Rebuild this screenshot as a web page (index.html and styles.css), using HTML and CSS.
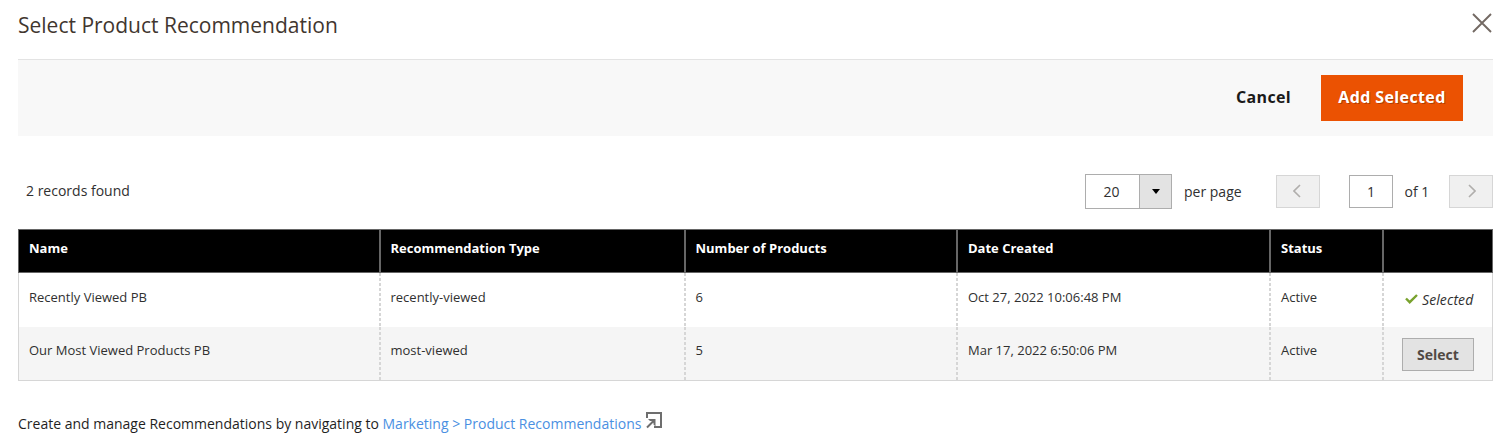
FILE: index.html
```html
<!DOCTYPE html>
<html lang="en"><head><meta charset="utf-8"><title>Select Product Recommendation</title><link rel="stylesheet" href="styles.css"></head>
<body>
<main class="modal">
<header class="header"><h1>Select Product Recommendation</h1>
<svg class="close" width="20" height="20" viewBox="0 0 20 20" fill="none" stroke="#736963" stroke-width="1.9"><path d="M1 1 19 19M19 1 1 19"/></svg></header>
<div class="actions"><button class="cancel">Cancel</button><button class="add">Add Selected</button></div>
<div class="toolbar"><span class="count">2 records found</span>
<div class="pager"><div class="size"><span class="size-value">20</span><span class="size-arrow"><svg width="8" height="5" viewBox="0 0 8 5"><path d="M0 0h8L4 5z" fill="#000"/></svg></span></div><span class="per">per page</span>
<button class="nav prev"><svg width="8" height="14" viewBox="0 0 8 14" fill="none" stroke="#b0aeac" stroke-width="1.6"><path d="M7 1 1 7l6 6"/></svg></button><span class="page">1</span><span class="of">of 1</span>
<button class="nav next"><svg width="8" height="14" viewBox="0 0 8 14" fill="none" stroke="#b0aeac" stroke-width="1.6"><path d="m1 1 6 6-6 6"/></svg></button></div></div>
<table class="grid"><colgroup><col class="c1"><col class="c2"><col class="c3"><col class="c4"><col class="c5"><col class="c6"></colgroup>
<thead><tr><th>Name</th><th>Recommendation Type</th><th>Number of Products</th><th>Date Created</th><th>Status</th><th></th></tr></thead>
<tbody><tr><td>Recently Viewed PB</td><td>recently-viewed</td><td>6</td><td>Oct 27, 2022 10:06:48 PM</td><td>Active</td><td class="action"><span class="selected"><svg width="13" height="10" viewBox="0 0 13 10" fill="none" stroke="#79a22e" stroke-width="2.4"><path d="m1 4.500 3.700 3.700L12 1"/></svg>Selected</span></td></tr>
<tr><td>Our Most Viewed Products PB</td><td>most-viewed</td><td>5</td><td>Mar 17, 2022 6:50:06 PM</td><td>Active</td><td class="action"><button class="select">Select</button></td></tr></tbody></table>
<p class="note"><span>Create and manage Recommendations by navigating to <a>Marketing &gt; Product Recommendations</a></span><svg class="ext" width="16" height="17" viewBox="0 0 16 17" fill="none" stroke="#6e6e6e" stroke-width="2"><path d="M1 6V1h14v14H8"/><path d="M1 15.500 7.500 9"/><path d="M2 7h7.500v7.500L7.500 12.500V11L5.500 9H4z" fill="#6e6e6e" stroke="none"/></svg></p>
</main></body></html>
```
FILE: styles.css
```css
*{box-sizing:border-box}
body{margin:0;background:#fff;color:#303030;font:14px/20px "Open Sans",sans-serif}
button{font:inherit;padding:0;border:0}
.modal{width:1501px;height:443px;padding:0 8px 0 18px;overflow:hidden}
.header{height:59px;display:flex;justify-content:space-between;align-items:flex-start}
h1{margin:10px 0 0;font-size:21px;line-height:30px;font-weight:400;color:#41362f}
.close{margin:13px 1.5px 0 0}
.actions{height:77px;background:#f8f8f8;border-top:1px solid #e3e3e3;display:flex;justify-content:flex-end;align-items:flex-start;padding:15px 30px 0 0;font-size:16px;font-weight:700}
.cancel{height:46px;padding-bottom:2px;margin-right:30px;background:none;color:#1a1a1a;letter-spacing:.35px}
.add{width:142px;height:46px;padding-bottom:2px;background:#eb5202;color:#fff;text-shadow:1px 1px 0 rgba(0,0,0,.25);letter-spacing:.38px}
.toolbar{height:93px;display:flex;justify-content:space-between;padding-top:38px}
.count{margin:7px 0 0 8px}
.pager{display:flex;align-items:center;height:35px}
.size{display:flex;width:87px;height:35px;border:1px solid #adadad;margin-right:12px}
.size-value{width:53px;padding-right:2px;text-align:center;line-height:33px}
.size-arrow{flex:1;background:#e3e3e3;border-left:1px solid #adadad;display:grid;place-items:center}
.per{width:92px}
.nav{width:44px;height:33px;background:#f0f0f0;border:1px solid #d6d6d6;display:grid;place-items:center;padding:0 2px 2px 0}
.next{padding:0 0 2px 2px}
.prev{margin-right:29px}
.page{width:44px;height:33px;border:1px solid #adadad;line-height:32px;text-align:center;margin-right:11.5px}
.of{width:44.5px}
.grid{width:1475px;table-layout:fixed;border-collapse:separate;border-spacing:0;font-size:13px;line-height:18px}
.c1{width:361px}.c2{width:305px}.c3{width:272px}.c4{width:313px}.c5{width:113px}.c6{width:111px}
th{height:44px;background:#000;color:#fff;text-align:left;vertical-align:top;padding:9px 10px 0;font-weight:700;border:solid #666;border-width:1px 0 1px 2px}
td{vertical-align:top;padding:15px 10px 0 12px;height:54px;background:repeating-linear-gradient(#d6d6d6 0 3px,transparent 3px 5px) left top/2px 100% no-repeat}
th:nth-child(2),th:nth-child(3){padding-left:9.5px}
td:nth-child(2),td:nth-child(3){padding-left:11.5px}
th:first-child{border-left-width:1px}
td:first-child{padding-left:10px;background-image:none;border-left:1px solid #d6d6d6}
th:last-child{border-right:1px solid #666}
td:last-child{border-right:1px solid #d6d6d6}
tbody tr:nth-child(2) td{background-color:#f5f5f5;padding-top:14px;border-bottom:1px solid #d6d6d6}
tbody td.action{padding:17px 0 0 20px}
tbody tr:nth-child(2) td.action{padding-top:11px}
.selected{display:flex;align-items:center;gap:4px;padding-left:3px;font-size:14px;line-height:20px;font-style:italic;letter-spacing:.1px}
.selected svg{margin-top:-2px}
.select{display:block;width:72px;height:33px;border:1px solid #adadad;background:#e3e3e3;color:#514943;font-size:14px;font-weight:700}
.note{margin:31px 0 0;display:flex;line-height:24px;color:#1f1f1f}
.note a{color:#4a90e2}
.ext{margin-left:5px}
```
